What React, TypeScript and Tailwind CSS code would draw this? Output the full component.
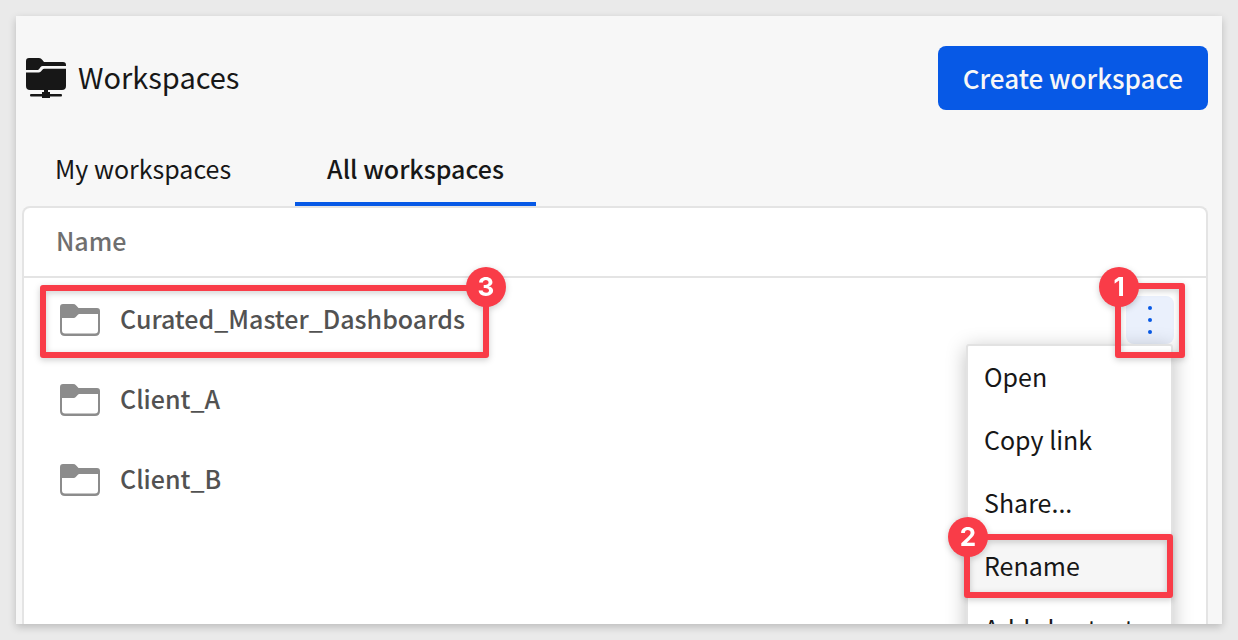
import React from "react";

const workspaces = ["Curated_Master_Dashboards", "Client_A", "Client_B"];
const menuItems = ["Open", "Copy link", "Share...", "Rename", "Add shortcut"];

function WorkspacesIcon() {
  return (
    <svg className="size-10 shrink-0" viewBox="0 0 40 40" fill="#171717" aria-hidden="true">
      <path d="M0 12V3Q0 0 3 0H13Q15 0 16.4 2L18 4H37Q40 4 40 7V8H16.6Q15.4 8 14.6 9L13 11.2Q12.4 12 11.6 12Z" />
      <path d="M0 14.5H12.5Q14 14.5 14.9 13.4L16.4 11.7Q17.2 10.8 18.2 10.8H40V28Q40 32 36 32H22V34H24V36H35Q36 36 36 37.3T35 38.5H24V40H16V38.5H5Q4 38.5 4 37.3T5 36H16V34H18V32H4Q0 32 0 28Z" />
    </svg>
  );
}

function FolderIcon() {
  return (
    <svg className="h-8 w-10 shrink-0" viewBox="0 0 40 32" fill="#8c8c8c" aria-hidden="true">
      <path
        fillRule="evenodd"
        d="M3 0H13Q15 0 16.2 1.4L18.5 4H37Q40 4 40 7V27Q40 32 35 32H5Q0 32 0 27V3Q0 0 3 0ZM2 14V26.5Q2 29.5 5 29.5H35Q38 29.5 38 26.5V10H19.5Q18.3 10 17.6 10.9L16 12.8Q15 14 13.5 14Z"
      />
    </svg>
  );
}

function Callout({ step, box, badge }: { step: number; box: string; badge: string }) {
  return (
    <div
      className={`pointer-events-none absolute z-20 rounded-[3px] border-6 border-[#f93c48] drop-shadow-[0_2px_3px_rgba(0,0,0,0.2)] ${box}`}
    >
      <span
        className={`absolute flex size-10 items-center justify-center rounded-full bg-[#f93c48] font-[Inter,sans-serif] text-[26px] leading-none font-bold text-white ${badge}`}
      >
        {step}
      </span>
    </div>
  );
}

function RowMenu() {
  return (
    <div className="relative ml-auto size-12">
      <button
        type="button"
        aria-label="More actions"
        className="flex size-12 items-center justify-center rounded-lg bg-[#eaf0fc]"
      >
        <svg className="h-7 w-1" viewBox="0 0 4 28" fill="#0759e6" aria-hidden="true">
          <circle cx="2" cy="2" r="2" />
          <circle cx="2" cy="14" r="2" />
          <circle cx="2" cy="26" r="2" />
        </svg>
      </button>
      <div
        role="menu"
        className="absolute top-full right-px z-10 w-[207px] rounded-[3px] border-2 border-[#e2e2e2] bg-white shadow-[0_4px_20px_rgba(0,0,0,0.25)]"
      >
        {menuItems.map((item) => (
          <div key={item} className="relative">
            <button
              type="button"
              role="menuitem"
              className={`block h-[63px] w-full px-4 pb-[3px] text-left text-[25px] leading-8 whitespace-nowrap text-[#171717] ${
                item === "Rename" ? "bg-[#f6f6f6]" : ""
              }`}
            >
              {item}
            </button>
            {item === "Rename" && (
              <Callout step={2} box="-left-1 -right-0.5 -top-px bottom-0" badge="-top-[23px] -left-[22px]" />
            )}
          </div>
        ))}
      </div>
      <Callout step={1} box="-inset-x-[11px] -top-[13px] -bottom-[14px]" badge="-top-[22px] -left-[22px]" />
    </div>
  );
}

export default function App() {
  return (
    <div className="flex h-screen flex-col bg-[#eaeaea] p-4 font-['Noto_Sans_CJK_SC',sans-serif] text-[#171717]">
      <main className="flex min-h-0 flex-1 flex-col overflow-hidden bg-[#f7f7f7] shadow-[0_3px_8px_rgba(0,0,0,0.2)]">
        <header className="flex items-center justify-between pt-[30px] pr-[14px] pl-[10px]">
          <h1 className="flex items-start gap-3 text-[29px] leading-9">
            <WorkspacesIcon />
            Workspaces
          </h1>
          <button
            type="button"
            className="h-16 rounded-lg bg-[#0759e6] px-[25px] text-[26px] leading-8 font-medium text-[#f7f7f7]"
          >
            Create workspace
          </button>
        </header>
        <nav className="mt-6 flex gap-8 px-[7px]" role="tablist">
          <button type="button" role="tab" aria-selected="false" className="h-[72px] border-b-4 border-transparent px-8 text-[25px] leading-8">
            My workspaces
          </button>
          <button type="button" role="tab" aria-selected="true" className="h-[72px] border-b-4 border-[#0759e6] px-8 text-[25px] leading-8 font-medium">
            All workspaces
          </button>
        </nav>
        <section className="mr-[14px] ml-[6px] flex-1 rounded-t-lg border-2 border-b-0 border-[#e4e4e4] bg-white">
          <table className="w-full border-separate border-spacing-0 text-left text-[25px] leading-8">
            <thead>
              <tr>
                <th colSpan={2} className="h-[70px] border-b-2 border-[#e4e4e4] px-8 pb-1 font-medium text-[#6f6f6f]">
                  Name
                </th>
              </tr>
            </thead>
            <tbody>
              {workspaces.map((name, index) => (
                <tr key={name}>
                  <td className="h-20 pt-1 pl-9 font-medium text-[#525252]">
                    <div className="relative flex w-fit items-start gap-5 leading-7">
                      <FolderIcon />
                      <a href="#workspace">{name}</a>
                      {index === 0 && (
                        <Callout step={3} box="-left-5 -right-6 -top-[19px] -bottom-[22px]" badge="-top-6 -right-[23px]" />
                      )}
                    </div>
                  </td>
                  <td className="pt-1 pr-8">{index === 0 && <RowMenu />}</td>
                </tr>
              ))}
            </tbody>
          </table>
        </section>
      </main>
    </div>
  );
}
